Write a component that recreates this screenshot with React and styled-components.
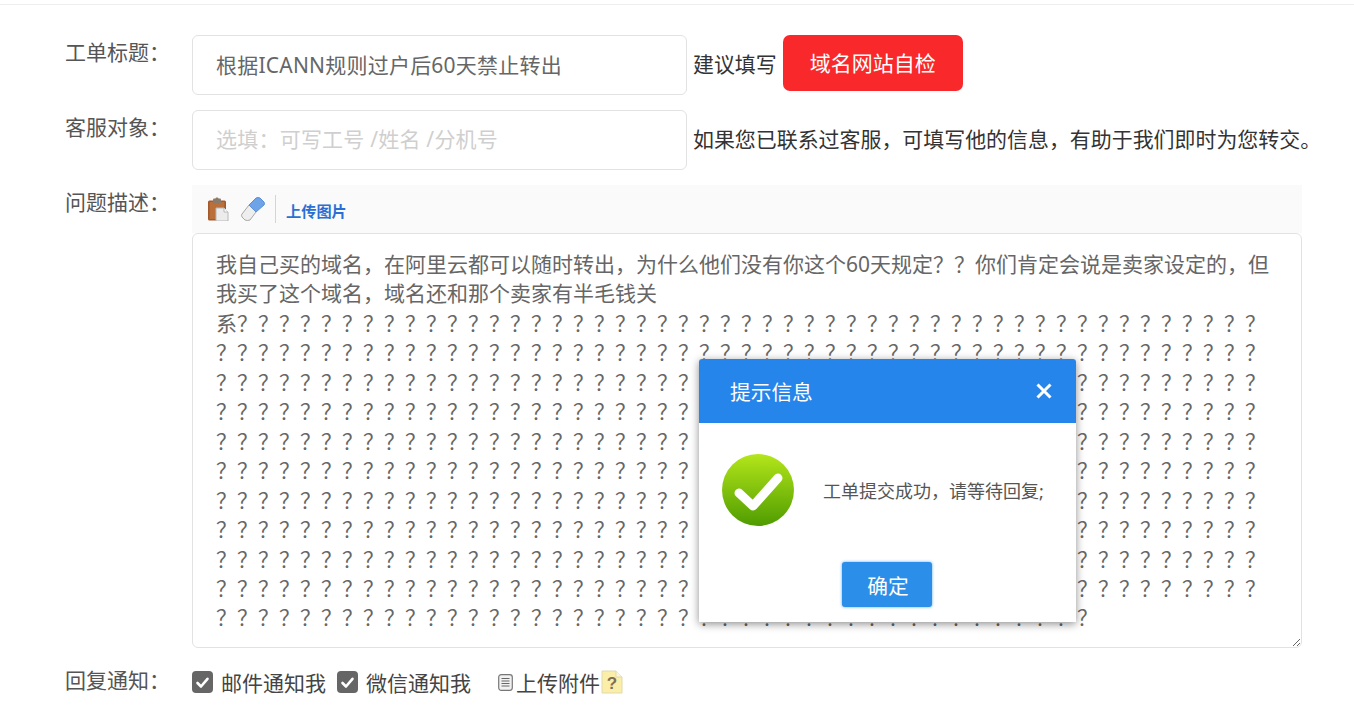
import React from "react";
import styled, { createGlobalStyle } from "styled-components";

const FONT = `"Noto Sans", "Noto Sans CJK SC", sans-serif`;

const Global = createGlobalStyle`
  html, body { margin: 0; padding: 0; height: 712px; overflow: hidden; background: #fff; }
  body { font-family: ${FONT}; }
  * { box-sizing: border-box; }
`;

const Page = styled.div`
  position: relative;
  width: 1354px;
  height: 712px;
  overflow: hidden;
`;
const TopRule = styled.div`
  height: 5px;
  border-bottom: 1px solid #eeeeee;
`;
const Form = styled.form`
  display: flex;
  flex-direction: column;
  gap: 15px;
  padding: 30px 0 0 65px;
`;
const Row = styled.div`
  display: flex;
  align-items: flex-start;
`;
const Label = styled.label`
  flex: 0 0 127px;
  font-size: 21px;
  line-height: 34px;
  color: #555;
`;
const TextInput = styled.input`
  width: 495px;
  height: 60px;
  padding: 0 23px 2px;
  border: 1px solid #e2e2e2;
  border-radius: 6px;
  background: #fff;
  outline: none;
  font: 21px ${FONT};
  letter-spacing: 0.22px;
  color: #666;
  &::placeholder { color: #cfcfcf; opacity: 1; }
`;
const Hint = styled.span`
  margin-left: 6px;
  font-size: 20.95px;
  line-height: 58px;
  color: #333;
  white-space: nowrap;
`;
const RedButton = styled.button`
  width: 180px;
  height: 56px;
  margin-left: 6px;
  padding: 0 0 2px;
  border: 0;
  border-radius: 7px;
  background: #f9282b;
  color: #fff;
  font: 21px ${FONT};
`;
const Editor = styled.div`
  display: flex;
  flex-direction: column;
  width: 1110px;
`;
const Toolbar = styled.div`
  display: flex;
  align-items: center;
  height: 48px;
  padding-left: 14px;
  background: #fafafa;
`;
const ToolSpacer = styled.span`
  width: 10px;
`;
const ToolDivider = styled.span`
  width: 1px;
  height: 28px;
  margin: 0 10px 0 9px;
  background: #d5d5d5;
`;
const UploadLink = styled.a`
  font-size: 15.2px;
  font-weight: 700;
  color: #2a6fd4;
  position: relative;
  top: 1px;
`;
const Area = styled.textarea`
  display: block;
  width: 1110px;
  height: 415px;
  padding: 16px 23px;
  border: 1px solid #e2e2e2;
  border-radius: 6px;
  outline: none;
  resize: both;
  overflow: hidden;
  white-space: pre-wrap;
  font: 21px/29.45px ${FONT};
  color: #666;
`;
const Options = styled.div`
  display: flex;
  align-items: center;
  height: 38px;
`;
const Check = styled.span`
  display: inline-flex;
  align-items: center;
  justify-content: center;
  width: 21px;
  height: 22px;
  border-radius: 4px;
  background: #666;
`;
const OptionText = styled.span`
  margin: 0 11px 0 8px;
  font-size: 21px;
  color: #444;
  white-space: nowrap;
`;
const AttachText = styled.span`
  margin: 0 1px 0 3px;
  font-size: 21px;
  color: #444;
  white-space: nowrap;
`;
const DocWrap = styled.span`
  display: inline-flex;
  margin-left: 16px;
`;

const Dialog = styled.div`
  position: absolute;
  left: 699px;
  top: 359px;
  width: 377px;
  height: 263px;
  border-radius: 3px 3px 0 0;
  background: #fff;
  box-shadow: 0 2px 8px rgba(0, 0, 0, 0.45);
  display: flex;
  flex-direction: column;
`;
const DialogHeader = styled.div`
  display: flex;
  align-items: center;
  justify-content: space-between;
  height: 64px;
  padding: 0 23px 0 31px;
  background: #2585ea;
  border-radius: 3px 3px 0 0;
  color: #fff;
  font-size: 20.7px;
`;
const DialogBody = styled.div`
  display: flex;
  align-items: center;
  padding: 31px 0 0 23px;
  gap: 29px;
`;
const Message = styled.span`
  font-size: 18px;
  color: #555;
  white-space: nowrap;
`;
const DialogFooter = styled.div`
  display: flex;
  justify-content: center;
  margin-top: 36px;
  padding-right: 2px;
`;
const OkButton = styled.button`
  width: 90px;
  height: 45px;
  padding: 0 0 0 3px;
  border: 0;
  border-radius: 3px;
  background: #2b8fe9;
  box-shadow: 0 0 3px rgba(43, 143, 233, 0.8);
  color: #fff;
  font: 20.7px ${FONT};
`;

const ClipboardIcon = () => (
  <svg width="24" height="24" viewBox="0 0 24 24">
    <rect x="2" y="3.5" width="18" height="20" rx="1.5" fill="#a3592c" />
    <rect x="3.6" y="5" width="14.8" height="17" fill="#b9703a" />
    <rect x="7" y="1.5" width="8" height="5" rx="1" fill="#8a7a6c" />
    <rect x="9.6" y="0.5" width="2.8" height="2.6" rx="1" fill="#8a7a6c" />
    <path d="M10 11h8l4 4v9H10z" fill="#ececec" stroke="#b8b8b8" />
    <path d="M18 11v4h4" fill="#fff" stroke="#b8b8b8" />
  </svg>
);
const EraserIcon = () => (
  <svg width="26" height="26" viewBox="0 0 26 26">
    <path d="M2 18 L9 9 L16 16 L10 24 Q7 25 5 24 L2 21 Q1 19 2 18Z" fill="#eeeeee" stroke="#a8a8a8" />
    <path d="M9 9 L16 2 Q18 1 20 2 L24 6 Q25 8 24 9 L16 16Z" fill="#6fa3e8" stroke="#5c8fd6" />
  </svg>
);
const CheckMark = () => (
  <svg width="15" height="15" viewBox="0 0 15 15">
    <path d="M2.5 8 L6 11.5 L12.5 3.8" fill="none" stroke="#fff" strokeWidth="2.6" strokeLinecap="round" strokeLinejoin="round" />
  </svg>
);
const DocIcon = () => (
  <svg width="15" height="17" viewBox="0 0 15 17">
    <rect x="0.7" y="0.7" width="13.6" height="15.6" rx="2.5" fill="#f1f1f1" stroke="#777" strokeWidth="1.2" />
    <path d="M3.5 4.5h8M3.5 7h8M3.5 9.5h8M3.5 12h8" stroke="#666" strokeWidth="1.1" />
  </svg>
);
const HelpIcon = () => (
  <svg width="22" height="24" viewBox="0 0 22 24">
    <path d="M1 1h14l6 6v16H1z" fill="#fbeea8" stroke="#e0d9ae" />
    <path d="M15 1v6h6" fill="#fff8d8" stroke="#e0d9ae" />
    <text x="11" y="18.5" textAnchor="middle" fontFamily="Liberation Sans, sans-serif" fontWeight="700" fontSize="17" fill="#77725a">?</text>
  </svg>
);
const SuccessIcon = () => (
  <svg width="72" height="72" viewBox="0 0 72 72">
    <defs>
      <linearGradient id="succ" x1="0" y1="0" x2="0" y2="1">
        <stop offset="0" stopColor="#b4e61a" />
        <stop offset="1" stopColor="#4f9c00" />
      </linearGradient>
    </defs>
    <circle cx="36" cy="36" r="36" fill="url(#succ)" />
    <path d="M17 39 L31 52 L56 24" fill="none" stroke="#fff" strokeWidth="9" strokeLinecap="round" strokeLinejoin="round" />
  </svg>
);
const CloseIcon = () => (
  <svg width="18" height="18" viewBox="0 0 18 18">
    <path d="M2.5 2.5 L15.5 15.5 M15.5 2.5 L2.5 15.5" stroke="#fff" strokeWidth="3" />
  </svg>
);

const Q = "？";
const body =
  "我自己买的域名，在阿里云都可以随时转出，为什么他们没有你这个60天规定？？你们肯定会说是卖家设定的，但\n" +
  "我买了这个域名，域名还和那个卖家有半毛钱关\n" +
  "系" + Q.repeat(49) + "\n" +
  Array.from({ length: 9 }, () => Q.repeat(50)).join("\n") + "\n" +
  Q.repeat(42);

export default function App() {
  return (
    <Page>
      <Global />
      <TopRule />
      <Form>
        <Row>
          <Label>工单标题：</Label>
          <TextInput readOnly defaultValue="根据ICANN规则过户后60天禁止转出" />
          <Hint>建议填写</Hint>
          <RedButton type="button">域名网站自检</RedButton>
        </Row>
        <Row>
          <Label>客服对象：</Label>
          <TextInput readOnly placeholder="选填：可写工号 /姓名 /分机号" />
          <Hint>如果您已联系过客服，可填写他的信息，有助于我们即时为您转交。</Hint>
        </Row>
        <Row>
          <Label>问题描述：</Label>
          <Editor>
            <Toolbar>
              <ClipboardIcon />
              <ToolSpacer />
              <EraserIcon />
              <ToolDivider />
              <UploadLink>上传图片</UploadLink>
            </Toolbar>
            <Area readOnly defaultValue={body} />
          </Editor>
        </Row>
        <Row>
          <Label>回复通知：</Label>
          <Options>
            <Check><CheckMark /></Check>
            <OptionText>邮件通知我</OptionText>
            <Check><CheckMark /></Check>
            <OptionText>微信通知我</OptionText>
            <DocWrap><DocIcon /></DocWrap>
            <AttachText>上传附件</AttachText>
            <HelpIcon />
          </Options>
        </Row>
      </Form>
      <Dialog>
        <DialogHeader>
          <span>提示信息</span>
          <CloseIcon />
        </DialogHeader>
        <DialogBody>
          <SuccessIcon />
          <Message>工单提交成功，请等待回复;</Message>
        </DialogBody>
        <DialogFooter>
          <OkButton type="button">确定</OkButton>
        </DialogFooter>
      </Dialog>
    </Page>
  );
}
